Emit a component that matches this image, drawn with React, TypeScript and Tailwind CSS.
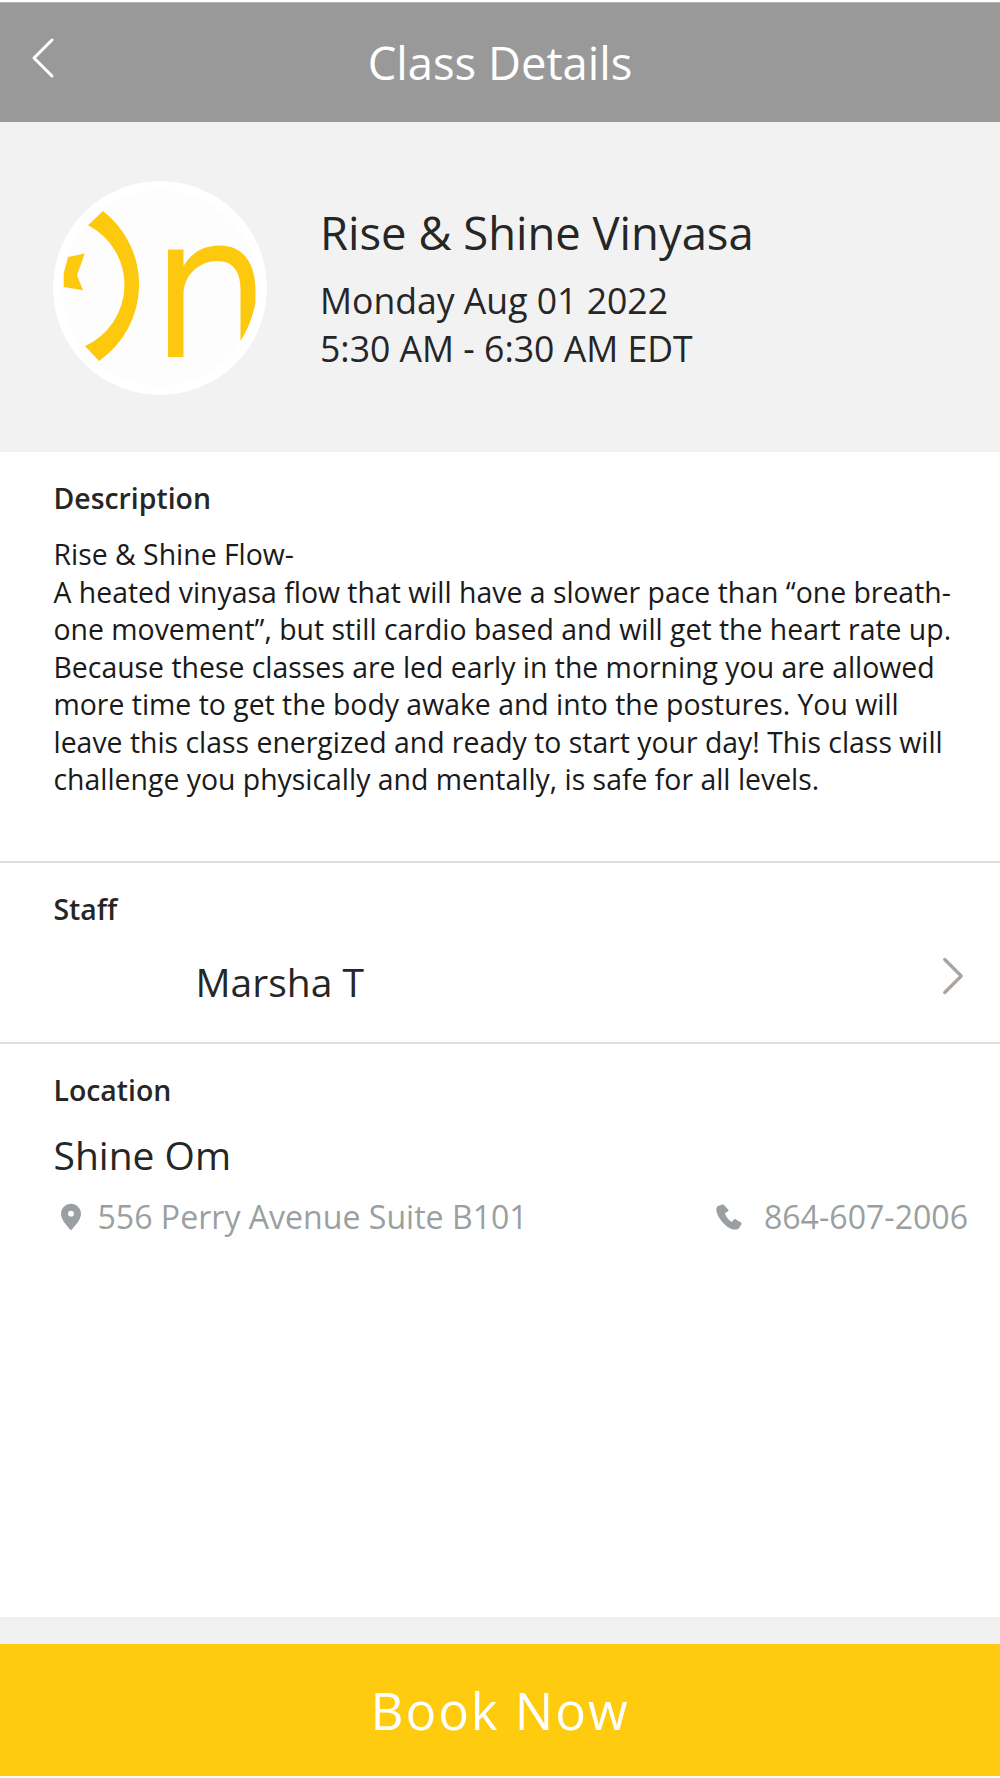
import { ChevronLeft, ChevronRight } from "lucide-react";

function Logo() {
  return (
    <svg viewBox="0 0 214 214" className="mt-[1px] h-[214px] w-[214px] shrink-0 rounded-full bg-white">
      <circle cx="107" cy="107" r="98" fill="#fdfdfd" />
      <path
        d="M50 30A93 93 0 0 1 46 180L32 165A67 67 0 0 0 35 44.300Z"
        fill="#fdc90f"
      />
      <path d="M31.7 72.6L15 76L10.7 92.6V106L30 109.3L24 94.3Z" fill="#fdc90f" />
      <path
        d="M115 68.6H130.5V85C139 71 151 64.500 167 64.500C191 64.500 202.4 84 202.4 108V122C199 138 194 150 187.500 160V108C187.500 91 180 80 165 80C147 80 130.5 93 130.5 114V176H115Z"
        fill="#fdc90f"
      />
    </svg>
  );
}

function PinIcon() {
  return (
    <svg viewBox="0 0 24 32" className="h-[30px] w-[20px] fill-[#9a9fa1]">
      <path
        fillRule="evenodd"
        d="M12 0C5.4 0 0 5.300 0 12c0 7.500 8.500 16 12 20 3.500-4 12-12.500 12-20C24 5.300 18.600 0 12 0Zm0 15.500a3.500 3.500 0 1 1 0-7 3.500 3.500 0 0 1 0 7Z"
      />
    </svg>
  );
}

function PhoneIcon() {
  return (
    <svg viewBox="0 0 26 26" className="h-[26px] w-[26px] fill-[#9a9fa1]">
      <path d="M6.500 0.500 2 2C0.500 3 0 5 0.500 7.500 2 14 9 22.500 15.500 25c3 1 6.500 1 8-1.500l2-3.500c0.300-0.600 0.100-1.200-0.500-1.600l-5.500-3.200c-0.600-0.300-1.200-0.200-1.600 0.300l-2 2.400c-3-1.500-6-5.500-7-9l3-1.500c0.600-0.300 0.800-0.900 0.600-1.500L8.200 1.200C7.900 0.500 7.200 0.200 6.500 0.500Z" />
    </svg>
  );
}

export default function App() {
  return (
    <main className="flex h-[1778px] flex-col bg-white font-['Open_Sans',sans-serif] text-[#262626]">
      <header className="relative mt-[2px] flex h-[120px] items-center justify-center border-t border-[#b5b5b5] bg-[#999999]">
        <ChevronLeft className="absolute left-[7px] top-[19px] h-[72px] w-[72px] text-white" strokeWidth={1} />
        <h1 className="text-[45.4px] leading-none text-white">Class Details</h1>
      </header>

      <section className="flex h-[330px] items-center gap-[53px] bg-[#f2f2f2] pl-[53px]">
        <Logo />
        <div>
          <h2 className="text-[45.4px] leading-[60px]">Rise &amp; Shine Vinyasa</h2>
          <p className="mt-[14px] text-[35.6px] leading-[48px]">Monday Aug 01 2022</p>
          <p className="text-[35.6px] leading-[48px]">5:30 AM - 6:30 AM EDT</p>
        </div>
      </section>

      <section className="h-[411px] border-b-2 border-[#dfdfdf] pl-[53.5px] pr-[45px] pt-[27px]">
        <h3 className="text-[28.4px] font-semibold leading-[38px]">Description</h3>
        <p className="mt-[19px] text-[28.4px] leading-[37.5px] text-[#1a1a1a]">
          Rise &amp; Shine Flow-
          <br />
          A heated vinyasa flow that will have a slower pace than “one breath-one movement”, but still cardio based and will get the heart rate up. Because these classes are led early in the morning you are allowed more time to get the body awake and into the postures. You will leave this class energized and ready to start your day! This class will challenge you physically and mentally, is safe for all levels.
        </p>
      </section>

      <section className="h-[181px] border-b-2 border-[#dfdfdf] pl-[53.5px] pr-[34px] pt-[27px]">
        <h3 className="text-[28.4px] font-semibold leading-[38px]">Staff</h3>
        <div className="mt-[28px] flex items-center justify-between">
          <span className="pl-[142px] text-[39px] leading-[52px]">Marsha T</span>
          <ChevronRight className="-mb-[20px] -mr-[20px] -mt-[32px] h-[66px] w-[66px] text-[#aaa5a0]" strokeWidth={1.2} />
        </div>
      </section>

      <section className="flex-1 pl-[53.5px] pr-[32px] pt-[27px]">
        <h3 className="text-[28.4px] font-semibold leading-[38px]">Location</h3>
        <p className="mt-[20px] text-[39px] leading-[52px]">Shine Om</p>
        <div className="mt-[14px] flex items-center justify-between text-[32.1px] leading-[44px] text-[#9a9fa1]">
          <div className="flex items-center gap-[17px] pl-[7px]">
            <PinIcon />
            <span>556 Perry Avenue Suite B101</span>
          </div>
          <div className="flex items-center gap-[22px]">
            <PhoneIcon />
            <span>864-607-2006</span>
          </div>
        </div>
      </section>

      <div className="h-[27px] bg-[#f1f1f1]" />
      <button className="mb-[2px] h-[132px] bg-[#fecb0e] text-[51px] tracking-[2px] text-white">Book Now</button>
    </main>
  );
}
